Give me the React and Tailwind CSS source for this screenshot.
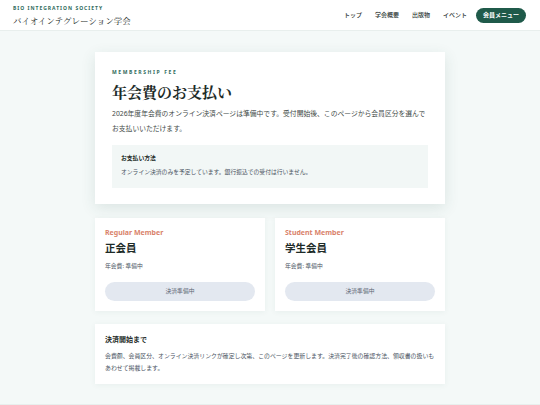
import React from 'react';

const sans = { fontFamily: '"Noto Sans", "Noto Sans CJK JP", sans-serif' };
const serif = { fontFamily: '"Noto Serif CJK JP", "Liberation Serif", "Noto Sans CJK JP", serif' };

function PlanCard({ en, ja }) {
  return (
    <div className="bg-white px-[10px] pt-[10px] pb-[10px] shadow-[0_1px_6px_rgba(40,80,70,0.06)]">
      <div className="text-[7px] font-bold text-[#d9826a] leading-[10px]">{en}</div>
      <div className="text-[10.5px] font-bold text-[#1d2b28] leading-[14px] mt-[3px]">{ja}</div>
      <div className="text-[5.8px] text-[#4b5563] leading-[10px] mt-[6px]">年会費: 準備中</div>
      <div className="mt-[11px] h-[19px] rounded-full bg-[#e3e8f0] flex items-center justify-center text-[5.8px] text-[#5b6472]">決済準備中</div>
    </div>
  );
}

export default function App() {
  return (
    <div className="w-[540px] h-[405px] overflow-hidden bg-[#f4f9f8]" style={sans}>
      {/* Header */}
      <header className="h-[31px] bg-white border-b border-[#e8efed] flex items-center justify-between pl-[13px] pr-[14px]">
        <div>
          <div className="text-[5px] font-bold tracking-[0.2em] text-[#2f6b5c] leading-[6px]">BIO INTEGRATION SOCIETY</div>
          <div className="text-[8.5px] text-[#1d2b28] leading-[12px] mt-[3px]" style={serif}>バイオインテグレーション学会</div>
        </div>
        <nav className="flex items-center gap-[13px] text-[6px] text-[#2b3432] font-medium">
          <span>トップ</span>
          <span>学会概要</span>
          <span>出版物</span>
          <span>イベント</span>
          <span className="-ml-[4px] h-[15px] px-[7px] rounded-full bg-[#1f5a4a] text-white font-bold flex items-center">会員メニュー</span>
        </nav>
      </header>

      <main className="w-[350px] mx-auto pt-[21px]">
        <section className="bg-white px-[17px] pt-[17px] pb-[16px] shadow-[0_4px_14px_rgba(40,80,70,0.12)]">
          <div className="text-[5px] font-bold tracking-[0.32em] text-[#2f6b5c] leading-[6px]">MEMBERSHIP FEE</div>
          <h1 className="text-[15px] font-bold text-[#1d2b28] leading-[20px] mt-[7px]" style={serif}>年会費のお支払い</h1>
          <p className="text-[6.8px] text-[#3f4a48] leading-[14.5px] mt-[5px]">2026年度年会費のオンライン決済ページは準備中です。受付開始後、このページから会員区分を選んでお支払いいただけます。</p>
          <div className="mt-[9px] bg-[#f2f7f6] px-[9px] pt-[8px] pb-[11px]">
            <div className="text-[5.8px] font-bold text-[#1d2b28] leading-[10px]">お支払い方法</div>
            <div className="text-[5.8px] text-[#4b5563] leading-[10px] mt-[4px]">オンライン決済のみを予定しています。銀行振込での受付は行いません。</div>
          </div>
        </section>

        <div className="grid grid-cols-2 gap-[10px] mt-[14px]">
          <PlanCard en="Regular Member" ja="正会員" />
          <PlanCard en="Student Member" ja="学生会員" />
        </div>

        <section className="bg-white mt-[13px] px-[10px] pt-[10px] pb-[10px] shadow-[0_1px_6px_rgba(40,80,70,0.06)]">
          <div className="text-[7px] font-bold text-[#1d2b28] leading-[12px]">決済開始まで</div>
          <p className="text-[5.9px] text-[#4b5563] leading-[12px] mt-[4px]">会費額、会員区分、オンライン決済リンクが確定し次第、このページを更新します。決済完了後の確認方法、領収書の扱いもあわせて掲載します。</p>
        </section>
      </main>
      <div className="mt-[20px] border-t border-[#e8efed]" />
    </div>
  );
}
